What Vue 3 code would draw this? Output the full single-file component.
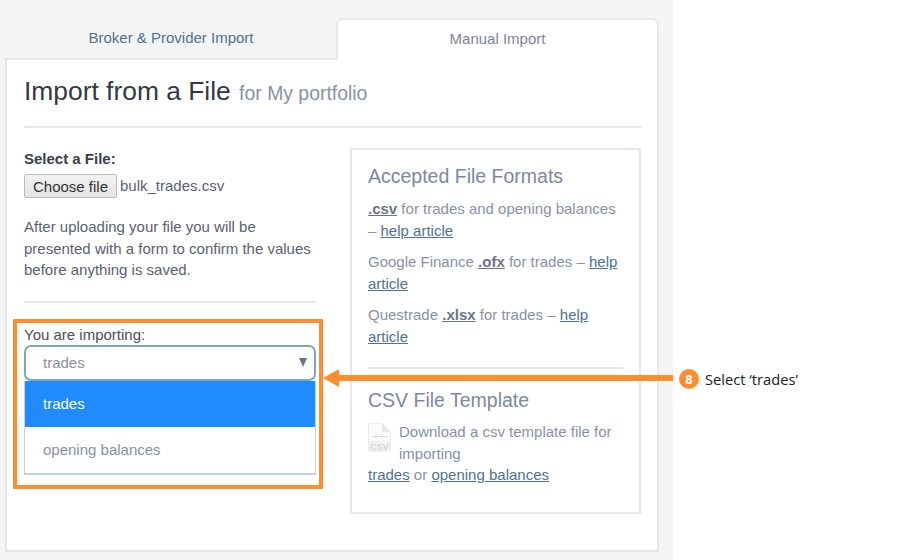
<script setup>
const formats = [
  { before: '', ext: '.csv', after: ' for trades and opening balances – ' },
  { before: 'Google Finance ', ext: '.ofx', after: ' for trades – ' },
  { before: 'Questrade ', ext: '.xlsx', after: ' for trades – ' }
]
</script>

<template>
  <div class="page">
    <div class="app">
      <div class="tabs">
        <div class="tab">Broker &amp; Provider Import</div>
        <div class="tab active">Manual Import</div>
      </div>
      <div class="panel">
        <h1 class="title">Import from a File <small>for My portfolio</small></h1>
        <hr class="rule" />
        <div class="columns">
          <div class="left">
            <label class="file-label">Select a File:</label>
            <div class="file-row">
              <button class="file-btn">Choose file</button>
              <span class="file-name">bulk_trades.csv</span>
            </div>
            <p class="note">After uploading your file you will be presented with a form to confirm the values before anything is saved.</p>
            <hr class="rule short" />
            <div class="import-label">You are importing:</div>
            <div class="select">
              <span>trades</span>
              <span class="caret"></span>
            </div>
            <ul class="options">
              <li class="selected">trades</li>
              <li>opening balances</li>
            </ul>
          </div>
          <div class="box">
            <h3>Accepted File Formats</h3>
            <p v-for="f in formats" :key="f.ext" class="format">
              {{ f.before }}<a class="ext">{{ f.ext }}</a>{{ f.after }}<a>help article</a>
            </p>
            <hr class="rule inner" />
            <h3>CSV File Template</h3>
            <div class="download">
              <svg class="csv-icon" width="23" height="29" viewBox="0 0 23 29">
                <path d="M.5.5H14L22.5 9V28.500H.5Z" fill="#fbfbfb" stroke="#ececec" />
                <path d="M14 .5V9H22.500Z" fill="#e8e8e8" />
                <path d="M4 13.500H19M8 11V16M14 11V16" stroke="#dcdcdc" fill="none" />
                <rect x="1" y="18" width="21" height="10" fill="#f1f1f1" />
                <text x="11.500" y="26.500" class="csv-text">CSV</text>
              </svg>
              <span>Download a csv template file for importing</span>
            </div>
            <p class="links"><a>trades</a> or <a>opening balances</a></p>
          </div>
        </div>
      </div>
    </div>

    <!-- tutorial annotation on top of the screenshot -->
    <div class="highlight"></div>
    <div class="arrow"></div>
    <div class="arrow-line"></div>
    <div class="callout">
      <span class="step">8</span>
      <span>Select ‘trades’</span>
    </div>
  </div>
</template>

<style scoped>
.page {
  position: relative;
  width: 907px;
  height: 560px;
  overflow: hidden;
  background: #fff;
  font-family: "Liberation Sans", Arial, sans-serif;
  color: #8a91a5;
}
.app {
  width: 673px;
  height: 560px;
  box-sizing: border-box;
  padding: 18px 14px 8px 5px;
  background: #f5f5f5;
  display: flex;
  flex-direction: column;
}
.tabs {
  display: flex;
  justify-content: space-between;
  height: 40px;
  padding-left: 1px;
}
.tab {
  width: 330px;
  text-align: center;
  font-size: 15px;
  line-height: 39px;
  color: #4f7293;
}
.tab.active {
  width: 323px;
  box-sizing: border-box;
  background: #fff;
  border: 2px solid #e6e8ec;
  border-bottom: none;
  border-radius: 7px 7px 0 0;
  color: #7d8699;
  line-height: 37px;
  position: relative;
  z-index: 1;
  margin-bottom: -1px;
  height: 42px;
}
.panel {
  flex: 1;
  background: #fff;
  border: 2px solid #e3e7ee;
  padding: 0 16px 0 17px;
  box-sizing: border-box;
}
.title {
  margin: 0;
  padding-top: 14px;
  height: 66px;
  box-sizing: border-box;
  font-size: 26.400px;
  font-weight: 400;
  line-height: 35px;
  color: #333a45;
}
.title small {
  font-size: 19.400px;
  color: #8a91a5;
  margin-left: 1px;
}
.rule {
  margin: 0;
  border: none;
  height: 2px;
  background: #e4e8ee;
}
.columns {
  display: flex;
  justify-content: space-between;
  padding-top: 20px;
}
.left {
  width: 292px;
  font-size: 15px;
  line-height: 21.500px;
}
.file-label {
  display: block;
  font-weight: 700;
  color: #3a3f4a;
  height: 26px;
}
.file-row {
  display: flex;
  align-items: center;
  gap: 3px;
}
.file-btn {
  width: 93px;
  height: 24px;
  padding: 0;
  background: linear-gradient(#f3f3f3, #e4e4e4);
  border: 1px solid #bdbdbd;
  border-radius: 2px;
  font-family: inherit;
  font-size: 15px;
  color: #333;
}
.file-name {
  color: #5b6170;
}
.note {
  margin: 18px 0 0;
  color: #5b6170;
}
.rule.short {
  margin-top: 20px;
}
.import-label {
  margin-top: 21px;
  height: 21px;
  color: #4a4f5c;
}
.select {
  height: 36px;
  box-sizing: border-box;
  display: flex;
  justify-content: space-between;
  align-items: center;
  padding: 0 7px 0 17px;
  background: #fff;
  border: 2px solid #7ea9b4;
  border-radius: 7px;
  color: #8a91a5;
}
.caret {
  width: 0;
  height: 0;
  border-left: 4.500px solid transparent;
  border-right: 4.500px solid transparent;
  border-top: 9px solid #6d7585;
}
.options {
  margin: 0;
  padding: 0;
  list-style: none;
  border: 1px solid #c4d2e8;
  border-width: 0 1px 2px;
}
.options li {
  height: 46px;
  line-height: 46px;
  padding-left: 18px;
}
.options .selected {
  background: #208aff;
  color: #fff;
}
.box {
  width: 291px;
  height: 366px;
  box-sizing: border-box;
  border: 2px solid #e4e8ee;
  padding: 0 16px;
  font-size: 15px;
  line-height: 21.500px;
}
.box h3 {
  margin: 0;
  font-size: 19.500px;
  font-weight: 400;
  line-height: 26px;
  color: #8088a0;
  padding-top: 13px;
}
.format {
  margin: 9px 0 10px;
}
.box a {
  color: #4f7293;
  text-decoration: underline;
}
.box a.ext {
  color: #6c7488;
  font-weight: 700;
}
.rule.inner {
  margin-top: 20px;
}
.rule.inner + h3 {
  padding-top: 18px;
}
.download {
  display: flex;
  gap: 8px;
  margin-top: 8px;
}
.csv-icon {
  flex: none;
  margin-top: 2px;
}
.csv-text {
  font-size: 9px;
  fill: #cccccc;
  text-anchor: middle;
}
.links {
  margin: 0;
}
.highlight {
  position: absolute;
  left: 13px;
  top: 319px;
  width: 310px;
  height: 170px;
  box-sizing: border-box;
  border: 4px solid #fd8d2d;
}
.arrow {
  position: absolute;
  left: 323px;
  top: 369px;
  width: 0;
  height: 0;
  border-top: 9px solid transparent;
  border-bottom: 9px solid transparent;
  border-right: 16px solid #fd8d2d;
}
.arrow-line {
  position: absolute;
  left: 338px;
  top: 375px;
  width: 335px;
  height: 6px;
  background: #fd8d2d;
}
.callout {
  position: absolute;
  left: 679px;
  top: 369px;
  display: flex;
  align-items: center;
  gap: 6px;
  font-family: "Open Sans", sans-serif;
  font-size: 14.700px;
  color: #222;
}
.step {
  width: 20px;
  height: 20px;
  border-radius: 50%;
  background: #fd8d2d;
  color: #fff;
  font-weight: 700;
  font-size: 13px;
  line-height: 20px;
  text-align: center;
}
</style>
